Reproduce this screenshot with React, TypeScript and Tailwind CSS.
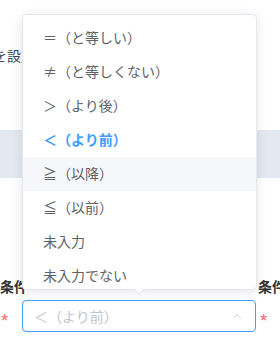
import { ChevronUp } from "lucide-react"

const options = [
  "＝（と等しい）",
  "≠（と等しくない）",
  "＞（より後）",
  "＜（より前）",
  "≧（以降）",
  "≦（以前）",
  "未入力",
  "未入力でない",
]

export default function App() {
  const selected = 3
  const hovered = 4
  return (
    <div
      className="relative w-[280px] h-[352px] overflow-hidden bg-white text-[14px] text-[#606266]"
      style={{ fontFamily: '"Noto Sans CJK JP", "Noto Sans", sans-serif' }}
    >
      {/* background form, partly hidden by the popper */}
      <div className="pt-[47px] h-[63px] leading-[16px] whitespace-nowrap text-[#34495e] -ml-[7px]">を設定する</div>
      <div className="mt-[67px] h-[48px] bg-[#e4e8f0]" />
      <div className="mt-[100px] h-[16px] flex justify-between leading-[16px] font-bold text-[#303133]">
        <span>条件</span>
        <span className="w-[22px] overflow-hidden whitespace-nowrap">条件</span>
      </div>
      <div className="mt-[6px] flex items-center h-[32px]">
        <span className="w-[22px] pl-[1px] translate-y-[4px] leading-none text-[#f56c6c] text-[19px] font-['Liberation_Sans',sans-serif]">*</span>
        <div className="w-[234px] h-[32px] border border-[#409eff] rounded-[4px] flex items-center justify-between pl-[11px] pr-[11px]">
          <span className="text-[#c0c4cc]">＜（より前）</span>
          <ChevronUp size={14} strokeWidth={1.5} className="text-[#c0c4cc]" />
        </div>
        <span className="ml-[4px] translate-y-[4px] leading-none text-[#f56c6c] text-[19px] font-['Liberation_Sans',sans-serif]">*</span>
      </div>

      {/* dropdown popper */}
      <div className="absolute left-[22px] top-[14px] w-[235px] h-[276px] bg-white border border-[#e4e7ed] rounded-[4px] shadow-[0_2px_12px_rgba(0,0,0,0.1)] overflow-hidden">
        <ul className="pt-[6px]">
          {options.map((o, i) => (
            <li
              key={o}
              className={
                "h-[34px] leading-[32px] px-[20px] whitespace-nowrap " +
                (i === selected ? "text-[#409eff] font-bold " : "") +
                (i === hovered ? "bg-[#f5f7fa]" : "")
              }
            >
              {o}
            </li>
          ))}
        </ul>
      </div>
      <div className="absolute left-[135px] top-[285px] w-[8px] h-[8px] bg-white border-r border-b border-[#e4e7ed] rotate-45" />
    </div>
  )
}
